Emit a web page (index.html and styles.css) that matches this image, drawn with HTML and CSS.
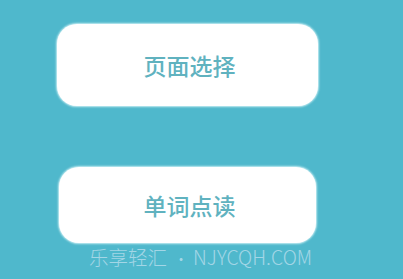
FILE: index.html
```html
<!DOCTYPE html>
<html lang="zh">
<head>
<meta charset="utf-8">
<link rel="stylesheet" href="styles.css">
</head>
<body>
<div class="screen">
  <div class="btn btn-first"><span>页面选择</span></div>
  <div class="btn btn-second"><span>单词点读</span></div>
  <div class="mark">乐享轻汇<span class="dot">•</span>NJYCQH.COM</div>
</div>
</body>
</html>
```
FILE: styles.css
```css
html, body {
  margin: 0;
  padding: 0;
  background: #4fb8cc;
}
.screen {
  width: 403px;
  height: 279px;
  overflow: hidden;
  display: flex;
  flex-direction: column;
  background: #4fb8cc;
}
.btn {
  background: #ffffff;
  border-radius: 20px;
  display: flex;
  align-items: center;
  justify-content: center;
  box-shadow: 0 0 2px 1px rgba(230, 250, 252, 0.8);
  font-family: "Noto Sans CJK SC", "Noto Sans", sans-serif;
  font-weight: 500;
  font-size: 23px;
  color: #60b2bf;
}
.btn-first {
  margin: 24px 0 0 57px;
  width: 261px;
  height: 82px;
}
.btn-first span { margin-top: 0px; margin-left: 4px; }
.btn-second {
  margin: 61px 0 0 59px;
  width: 257px;
  height: 76px;
}
.btn-second span { margin-top: 0px; margin-left: 4px; }
.mark {
  margin: 4px 0 0 89px;
  font-family: "Noto Sans CJK SC", "Open Sans", sans-serif;
  font-weight: 300;
  font-size: 19.5px;
  line-height: 20px;
  color: #a3d6e6;
  white-space: nowrap;
}
.dot {
  display: inline-block;
  margin: 0 4px 0 6px;
  font-size: 16px;
}
```
